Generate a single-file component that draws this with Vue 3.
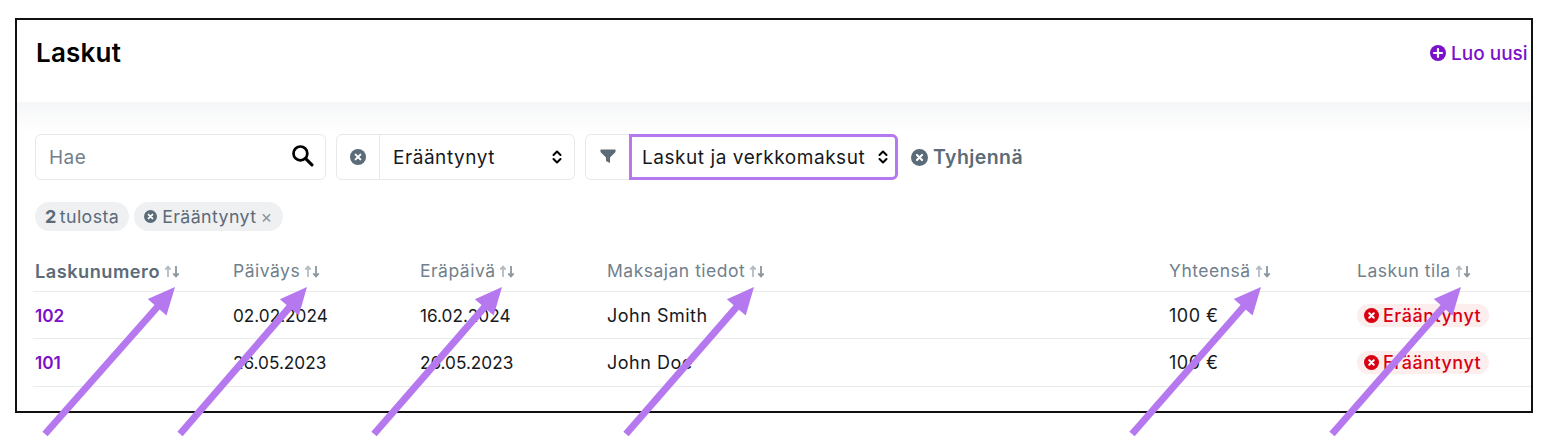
<script setup>
const columns = [
  { label: 'Laskunumero', strong: true },
  { label: 'Päiväys' },
  { label: 'Eräpäivä' },
  { label: 'Maksajan tiedot' },
  { label: 'Yhteensä' },
  { label: 'Laskun tila' }
]

const rows = [
  { id: '102', date: '02.02.2024', due: '16.02.2024', payer: 'John Smith', total: '100 €', status: 'Erääntynyt' },
  { id: '101', date: '26.05.2023', due: '26.05.2023', payer: 'John Doe', total: '100 €', status: 'Erääntynyt' }
]

// nuolet kuvan päällä: häntä -> kärki
const arrows = [
  [45, 434, 175, 287],
  [180, 434, 307, 287],
  [374, 434, 502, 287],
  [626, 434, 754, 287],
  [1132, 434, 1261, 287],
  [1332, 434, 1461, 287]
]

const arrowHead = (a) => {
  const ang = Math.atan2(a[3] - a[1], a[2] - a[0])
  const len = 27
  const wide = 12.5
  const bx = a[2] - Math.cos(ang) * len
  const by = a[3] - Math.sin(ang) * len
  const nx = -Math.sin(ang) * wide
  const ny = Math.cos(ang) * wide
  return `${a[2]},${a[3]} ${bx + nx},${by + ny} ${bx - nx},${by - ny}`
}
const shaftEnd = (a) => {
  const ang = Math.atan2(a[3] - a[1], a[2] - a[0])
  return { x: a[2] - Math.cos(ang) * 20, y: a[3] - Math.sin(ang) * 20 }
}
</script>

<template>
  <div class="page">
    <div class="frame">
      <header class="head">
        <h1>Laskut</h1>
        <a class="create">
          <svg class="ico-16" viewBox="0 0 16 16"><circle cx="8" cy="8" r="8" fill="#7b12c9" /><path d="M8 4v8M4 8h8" stroke="#fff" stroke-width="2.2" stroke-linecap="round" /></svg>
          Luo uusi
        </a>
      </header>

      <div class="body">
        <div class="filters">
          <label class="search">
            <input type="text" placeholder="Hae" />
            <svg class="mag" viewBox="0 0 22 22"><circle cx="9" cy="9" r="6.6" fill="none" stroke="#000" stroke-width="2.6" /><path d="M14 14l6 6" stroke="#000" stroke-width="3" stroke-linecap="round" /></svg>
          </label>

          <div class="group status">
            <span class="addon">
              <svg class="ico-16" viewBox="0 0 16 16"><circle cx="8" cy="8" r="8" fill="#5b6b78" /><path d="M5.6 5.6l4.8 4.8M10.4 5.6l-4.8 4.8" stroke="#fff" stroke-width="2" stroke-linecap="round" /></svg>
            </span>
            <div class="select">
              <span>Erääntynyt</span>
              <svg class="chev" viewBox="0 0 10 16"><path d="M1.5 6l3.5-3.5L8.500 6M1.500 10l3.500 3.500L8.500 10" fill="none" stroke="#000" stroke-width="2" stroke-linecap="round" stroke-linejoin="round" /></svg>
            </div>
          </div>

          <div class="group kind">
            <span class="addon">
              <svg class="funnel" viewBox="0 0 16 16"><path d="M0.500 1.500h15v2.500L10 9.500v5.500L6 13V9.500L0.500 4z" fill="#5b6b78" /></svg>
            </span>
            <div class="select focused">
              <span>Laskut ja verkkomaksut</span>
              <svg class="chev" viewBox="0 0 10 16"><path d="M1.500 6l3.500-3.500L8.500 6M1.500 10l3.500 3.500L8.500 10" fill="none" stroke="#000" stroke-width="2" stroke-linecap="round" stroke-linejoin="round" /></svg>
            </div>
          </div>

          <a class="clear">
            <svg class="ico-17" viewBox="0 0 16 16"><circle cx="8" cy="8" r="8" fill="#5b6b78" /><path d="M5.600 5.600l4.800 4.800M10.400 5.600l-4.800 4.800" stroke="#fff" stroke-width="2" stroke-linecap="round" /></svg>
            Tyhjennä
          </a>
        </div>

        <div class="chips">
          <span class="chip"><b>2</b>tulosta</span>
          <span class="chip">
            <svg class="ico-13" viewBox="0 0 16 16"><circle cx="8" cy="8" r="8" fill="#5b6b78" /><path d="M5.600 5.600l4.800 4.800M10.400 5.600l-4.800 4.800" stroke="#fff" stroke-width="2.200" stroke-linecap="round" /></svg>
            Erääntynyt
            <span class="times">×</span>
          </span>
        </div>

        <div class="table">
          <div class="row headrow">
            <div v-for="c in columns" :key="c.label" class="cell th" :class="{ strong: c.strong }">
              {{ c.label }}
              <svg class="sort" viewBox="0 0 16 13"><path d="M4 12V2M1.300 4.600L4 1.500l2.700 3.100" fill="none" stroke="#b4bcc3" stroke-width="1.800" /><path d="M12 1v10M9.300 8.400l2.700 3.100 2.700-3.100" fill="none" stroke="#8b969f" stroke-width="1.800" /></svg>
            </div>
          </div>
          <div v-for="r in rows" :key="r.id" class="row">
            <div class="cell digits"><a class="num">{{ r.id }}</a></div>
            <div class="cell digits">{{ r.date }}</div>
            <div class="cell digits">{{ r.due }}</div>
            <div class="cell">{{ r.payer }}</div>
            <div class="cell">{{ r.total }}</div>
            <div class="cell">
              <span class="badge">
                <svg class="ico-15" viewBox="0 0 16 16"><circle cx="8" cy="8" r="8" fill="#d90012" /><path d="M5.600 5.600l4.800 4.800M10.400 5.600l-4.800 4.800" stroke="#fff" stroke-width="2.200" stroke-linecap="round" /></svg>
                {{ r.status }}
              </span>
            </div>
          </div>
        </div>
      </div>
    </div>

    <svg class="arrows" width="1556" height="440" viewBox="0 0 1556 440">
      <g v-for="(a, i) in arrows" :key="i">
        <line :x1="a[0]" :y1="a[1]" :x2="shaftEnd(a).x" :y2="shaftEnd(a).y" stroke="#b678ee" stroke-width="7" />
        <polygon :points="arrowHead(a)" fill="#b678ee" />
      </g>
    </svg>
  </div>
</template>

<style>
html, body { margin: 0; background: #fff; }
</style>

<style scoped>
.page {
  position: relative;
  width: 1556px;
  height: 440px;
  padding: 18px 0 0 15px;
  box-sizing: border-box;
  overflow: hidden;
  font-family: Inter, "Noto Sans", sans-serif;
  color: #16191c;
}
.frame {
  width: 1518px;
  height: 395px;
  box-sizing: border-box;
  border: 2px solid #111;
  background: #fff;
  overflow: hidden;
}
.head {
  height: 82px;
  box-sizing: border-box;
  display: flex;
  justify-content: space-between;
  padding: 15px 0 0 19px;
}
h1 {
  margin: 0;
  font-size: 26px;
  line-height: 36px;
  font-weight: 600;
  color: #000;
  letter-spacing: 0.2px;
}
.create {
  display: flex;
  align-items: center;
  gap: 5px;
  height: 36px;
  width: 101px;
  flex: none;
  white-space: nowrap;
  font-size: 19px;
  font-weight: 500;
  color: #7b12c9;
}
.body {
  background: linear-gradient(#f5f6f7, #fff 30px);
  padding: 32px 0 0 18px;
  height: 291px;
  box-sizing: border-box;
}
.filters {
  display: flex;
  align-items: center;
  height: 46px;
}
.search {
  width: 291px;
  height: 46px;
  box-sizing: border-box;
  display: flex;
  align-items: center;
  padding: 0 11px 0 13px;
  border: 1px solid #e6e8ea;
  border-radius: 6px;
  background: #fff;
}
.search input {
  flex: 1;
  min-width: 0;
  border: 0;
  outline: 0;
  padding: 0;
  font: inherit;
  font-size: 19px;
  letter-spacing: 0.5px;
  background: transparent;
}
.search input::placeholder { color: #71808c; opacity: 1; }
.mag { width: 23px; height: 23px; margin-top: -4px; }
.group {
  display: flex;
  height: 46px;
  box-sizing: border-box;
  border: 1px solid #e6e8ea;
  border-radius: 6px;
  background: #fff;
  margin-left: 10px;
}
.status { width: 239px; }
.kind { width: 313px; }
.addon {
  width: 43px;
  flex: none;
  display: flex;
  align-items: center;
  justify-content: center;
}
.status .addon { width: 42px; border-right: 1px solid #e6e8ea; }
.select {
  flex: 1;
  display: flex;
  align-items: center;
  justify-content: space-between;
  padding: 0 12px 0 13px;
  font-size: 19px;
  letter-spacing: 0.55px;
  color: #16191c;
  white-space: nowrap;
}
.select.focused {
  margin: -1px -1px -1px 0;
  border: 3px solid #b678ee;
  border-radius: 0 6px 6px 0;
  padding: 0 7px 0 10px;
}
.chev { width: 10px; height: 16px; flex: none; }
.funnel { width: 16px; height: 16px; margin-top: -3px; }
.clear {
  display: flex;
  align-items: center;
  gap: 5px;
  margin-left: 13px;
  font-size: 19.500px;
  font-weight: 600;
  color: #5b6b78;
  letter-spacing: 0.4px;
}
.ico-16 { width: 16px; height: 16px; flex: none; }
.ico-17 { width: 17px; height: 17px; flex: none; }
.ico-15 { width: 15px; height: 15px; flex: none; }
.ico-13 { width: 13px; height: 13px; flex: none; }
.chips {
  display: flex;
  gap: 5px;
  margin-top: 22px;
}
.chip {
  display: flex;
  align-items: center;
  height: 29px;
  padding: 0 10px;
  gap: 4px;
  border-radius: 15px;
  background: #eef0f2;
  color: #5b6b78;
  font-size: 17.800px;
  letter-spacing: 0.4px;
}
.chip b { font-weight: 700; font-size: 18px; margin-right: -1px; }
.chip .ico-13 { margin-right: 1px; }
.times { color: #8b969f; }
.table {
  margin: 24px 0 0 -2px;
}
.row {
  display: grid;
  grid-template-columns: 198px 187px 187px 562px 188px 1fr;
  height: 47px;
  box-sizing: border-box;
  align-items: center;
  border-bottom: 1px solid #e8eaec;
  padding-left: 2px;
  font-size: 18px;
  letter-spacing: 0.5px;
}
.row:last-child { height: 48px; }
.digits { font-size: 17.200px; letter-spacing: 0; }
.headrow {
  height: 37px;
  align-items: start;
  font-size: 17.500px;
  color: #71808c;
}
.cell { white-space: nowrap; }
.th { display: flex; align-items: center; gap: 4px; line-height: 22px; margin-top: 5px; }
.th.strong { font-weight: 600; font-size: 18.200px; color: #5b6b78; }
.sort { width: 16px; height: 13px; flex: none; }
.num { color: #7b12c9; font-weight: 600; }
.badge {
  display: inline-flex;
  align-items: center;
  gap: 4px;
  height: 23px;
  padding: 0 8px 0 7px;
  border-radius: 12px;
  background: #fdeeee;
  color: #d90012;
  font-weight: 500;
}
.arrows {
  position: absolute;
  left: 0;
  top: 0;
  pointer-events: none;
}
</style>
